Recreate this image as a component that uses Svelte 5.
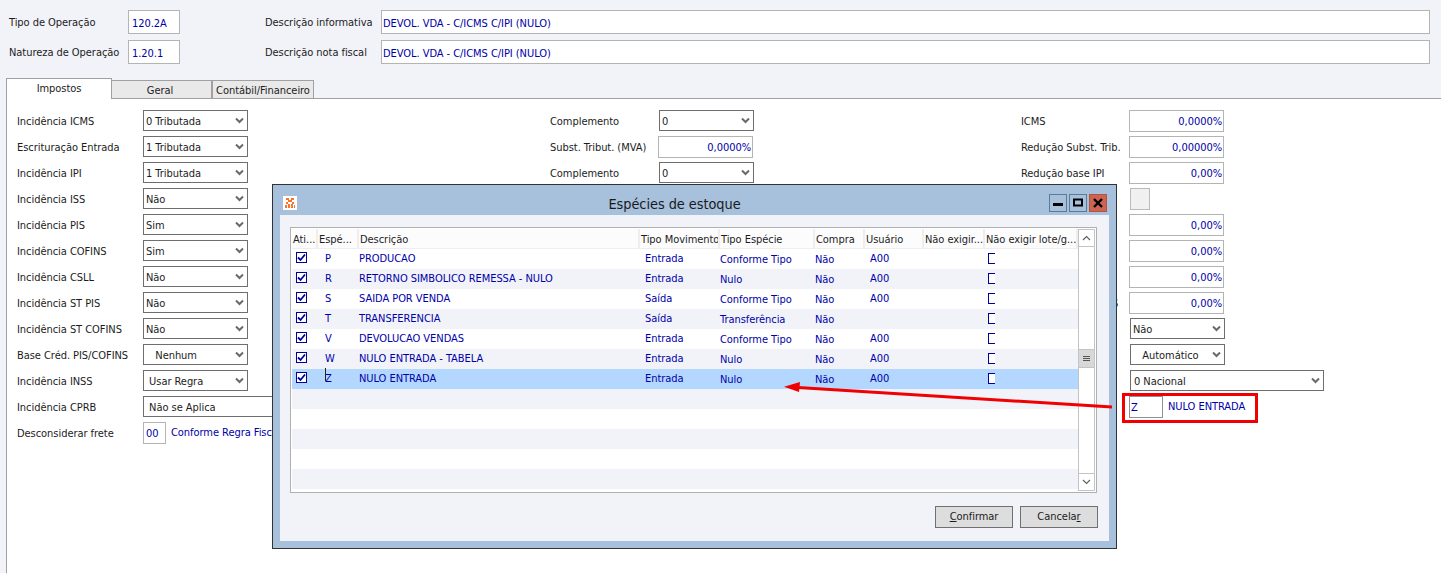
<script>
  const col1 = [
    ['Incidência ICMS', '0 Tributada'], ['Escrituração Entrada', '1 Tributada'], ['Incidência IPI', '1 Tributada'],
    ['Incidência ISS', 'Não'], ['Incidência PIS', 'Sim'], ['Incidência COFINS', 'Sim'], ['Incidência CSLL', 'Não'],
    ['Incidência ST PIS', 'Não'], ['Incidência ST COFINS', 'Não'], ['Base Créd. PIS/COFINS', '   Nenhum'], ['Incidência INSS', ' Usar Regra']
  ];
  const rows = [
    ['P', 'PRODUCAO', 'Entrada', 'Conforme Tipo', 'A00'],
    ['R', 'RETORNO SIMBOLICO REMESSA - NULO', 'Entrada', 'Nulo', 'A00'],
    ['S', 'SAIDA POR VENDA', 'Saída', 'Conforme Tipo', 'A00'],
    ['T', 'TRANSFERENCIA', 'Saída', 'Transferência', ''],
    ['V', 'DEVOLUCAO VENDAS', 'Entrada', 'Conforme Tipo', 'A00'],
    ['W', 'NULO ENTRADA - TABELA', 'Entrada', 'Nulo', 'A00'],
    ['Z', 'NULO ENTRADA', 'Entrada', 'Nulo', 'A00']
  ];
  const heads = ['Ati...', 'Espé...', 'Descrição', 'Tipo Movimento', 'Tipo Espécie', 'Compra', 'Usuário', 'Não exigir...', 'Não exigir lote/g...'];
  const blanks = [0, 1, 2, 3, 4];
  const pct = ['0,00%', '0,00%', '0,00%', '0,00%'];
  const auto = '   Automático';
  const aplica = ' Não se Aplica';
</script>

{#snippet chev()}
  <svg class="chev" width="9" height="7" viewBox="0 0 9 7"><path d="M1 1.5 L4.5 5 L8 1.5" fill="none" stroke="#6a6a6a" stroke-width="2"/></svg>
{/snippet}

<div class="page">
  <div class="top">
    <span class="lb">Tipo de Operação</span><div class="inp code">120.2A</div>
    <span class="lb">Descrição informativa</span><div class="inp wide">DEVOL. VDA - C/ICMS C/IPI (NULO)</div>
    <span class="lb">Natureza de Operação</span><div class="inp code">1.20.1</div>
    <span class="lb">Descrição nota fiscal</span><div class="inp wide">DEVOL. VDA - C/ICMS C/IPI (NULO)</div>
  </div>

  <div class="tabs">
    <div class="tab active">Impostos</div>
    <div class="tab geral">Geral</div>
    <div class="tab cont">Contábil/Financeiro</div>
  </div>

  <div class="panel">
    <div class="col c1">
      {#each col1 as [l, v]}
        <div class="row"><span class="rl">{l}</span><div class="sel">{v}{@render chev()}</div></div>
      {/each}
      <div class="row"><span class="rl">Incidência CPRB</span><div class="sel long">{aplica}</div></div>
      <div class="row"><span class="rl">Desconsiderar frete</span><div class="inp small">00</div><span class="link">Conforme Regra Fiscal</span></div>
    </div>
    <div class="col c2">
      <div class="row"><span class="rl">Complemento</span><div class="sel mid">0{@render chev()}</div></div>
      <div class="row"><span class="rl">Subst. Tribut. (MVA)</span><div class="inp num">0,0000%</div></div>
      <div class="row"><span class="rl">Complemento</span><div class="sel mid">0{@render chev()}</div></div>
    </div>
    <div class="col c3">
      <div class="row"><span class="rl">ICMS</span><div class="inp num">0,0000%</div></div>
      <div class="row"><span class="rl">Redução Subst. Trib.</span><div class="inp num">0,00000%</div></div>
      <div class="row"><span class="rl">Redução base IPI</span><div class="inp num">0,00%</div></div>
      <div class="row"><span class="rl"></span><div class="flag"></div></div>
      {#each pct as p, i}
        <div class="row"><span class="rl">{i === 3 ? 'Redução ST COFINS' : ''}</span><div class="inp num">{p}</div></div>
      {/each}
      <div class="row"><span class="rl"></span><div class="sel right">Não{@render chev()}</div></div>
      <div class="row"><span class="rl"></span><div class="sel right">{auto}{@render chev()}</div></div>
      <div class="row"><span class="rl"></span><div class="sel nac">0 Nacional{@render chev()}</div></div>
      <div class="row"><span class="rl"></span><div class="inp z">Z</div><span class="link nulo">NULO ENTRADA</span></div>
    </div>
  </div>

  <div class="dialog">
    <div class="titlebar">
      <div class="logo">
        <svg width="12" height="12" viewBox="0 0 12 12">
          <path d="M2 1h3v2H2zM7 1h3v2H7zM4 3h4v2H4zM2 5h2v2H2zM8 5h2v2H8zM1 8h2v3H1zM4 7h2v4H4zM7 7h2v4H7zM10 8h1v3h-1z" fill="#f8762c"/>
        </svg>
      </div>
      <div class="wtitle">Espécies de estoque</div>
      <div class="wbtns">
        <div class="wb"><svg width="10" height="10" viewBox="0 0 10 10"><rect x="0" y="5" width="10" height="3" fill="#000"/></svg></div>
        <div class="wb"><svg width="10" height="10" viewBox="0 0 10 10"><rect x="1" y="1.5" width="8" height="6" fill="none" stroke="#000" stroke-width="2"/></svg></div>
        <div class="wb close"><svg width="10" height="10" viewBox="0 0 10 10"><path d="M1 1l8 8M9 1l-8 8" stroke="#000" stroke-width="2.4"/></svg></div>
      </div>
    </div>
    <div class="body">
      <div class="grid">
        <div class="gmain">
          <div class="ghead">
            {#each heads as h}<div class="hc">{h}</div>{/each}
          </div>
          {#each rows as r, i}
            <div class="grow" class:alt={i % 2 === 1} class:sel-row={i === 6}>
              <div class="cell"><span class="cb"><svg width="9" height="9" viewBox="0 0 9 9"><path d="M1 4.5L3.5 7L8 1.5" fill="none" stroke="#00009a" stroke-width="1.8"/></svg></span></div>
              <div class="cell esp" class:zed={r[0] === 'Z'}>{r[0]}</div>
              <div class="cell">{r[1]}</div>
              <div class="cell mov">{r[2]}</div>
              <div class="cell low">{r[3]}</div>
              <div class="cell low">Não</div>
              <div class="cell usr">{r[4]}</div>
              <div class="cell"></div>
              <div class="cell"><span class="cb2"></span></div>
            </div>
          {/each}
          {#each blanks as b}
            <div class="grow" class:alt={b % 2 === 0}></div>
          {/each}
        </div>
        <div class="scroll">
          <div class="sbtn"><svg width="9" height="6" viewBox="0 0 9 6"><path d="M1 5L4.5 1.5L8 5" fill="none" stroke="#606060" stroke-width="1.2"/></svg></div>
          <div class="strack">
            <div class="thumb"><span></span><span></span><span></span></div>
          </div>
          <div class="sbtn"><svg width="9" height="6" viewBox="0 0 9 6"><path d="M1 1L4.5 4.5L8 1" fill="none" stroke="#606060" stroke-width="1.2"/></svg></div>
        </div>
      </div>
      <div class="actions">
        <div class="btn"><u>C</u>onfirmar</div>
        <div class="btn">Cancela<u>r</u></div>
      </div>
    </div>
  </div>

  <div class="redbox"></div>
  <svg class="arrow" width="340" height="30" viewBox="0 0 340 30">
    <path d="M14 7.6 L328 27" stroke="#f00000" stroke-width="3" fill="none"/>
    <path d="M0 6.7 L16 2 L15 12 Z" fill="#f00000"/>
  </svg>
</div>

<style>
  :global(body) { margin: 0; }
  .page {
    position: relative; width: 1441px; height: 573px; overflow: hidden; background: #f2f3f9;
    font: 11px "DejaVu Sans Condensed", "DejaVu Sans", sans-serif; color: #1c1c1c; letter-spacing: -0.05px;
  }
  .top {
    height: 78px; box-sizing: border-box; padding: 10px 11px 0 9px;
    display: grid; grid-template-columns: 119px 137px 116px 1fr; grid-auto-rows: 24px; row-gap: 6px; align-items: center;
  }
  .lb { white-space: nowrap; line-height: 24px; padding-top: 1px; height: 23px; }
  .inp {
    box-sizing: border-box; background: #fff; border: 1px solid #b4b4b4; color: #0000a8; height: 22px; line-height: 21px;
    padding: 0 3px; white-space: pre;
  }
  .top .inp { height: 24px; line-height: 22px; padding-top: 2px; }
  .code { width: 52px; }
  .wide { padding-left: 1px; }
  .tabs { display: flex; align-items: flex-end; height: 21px; padding-left: 6px; position: relative; z-index: 1; }
  .tab {
    box-sizing: border-box; height: 18px; background: #e9e9e9; border: 1px solid #a0a0a0; border-bottom: 0; border-left-width: 0;
    text-align: center; line-height: 19px; margin-bottom: 1px; color: #222;
  }
  .tab.active { width: 106px; height: 21px; margin-bottom: 0; background: #fff; border-left-width: 1px; line-height: 19px; }
  .geral { width: 100px; border-left: 0; padding-right: 3px; }
  .cont { width: 102px; border-left: 1px solid #a0a0a0; }
  .panel {
    height: 480px; margin-left: 6px; box-sizing: border-box; background: #fff;
    border-top: 1px solid #a0a0a0; border-left: 1px solid #a0a0a0; display: flex; padding: 11px 0 0 10px; margin-top: -1px;
  }
  .col { display: flex; flex-direction: column; gap: 4px; }
  .c1 { width: 533px; --lw: 126px; }
  .c2 { width: 471px; --lw: 108px; }
  .c3 { --lw: 108px; }
  .row { height: 22px; display: flex; align-items: flex-start; }
  .rl { width: var(--lw); flex: none; box-sizing: border-box; padding-top: 1px; height: 22px; line-height: 21px; white-space: nowrap; overflow: hidden; color: #1c1c1c; }
  .sel {
    position: relative; box-sizing: border-box; width: 105px; height: 21px; line-height: 19px; background: #fff;
    border: 1px solid #6e6e6e; padding: 1px 0 0 2px; white-space: pre; color: #1c1c1c;
  }
  .chev { position: absolute; right: 3px; top: 6px; }
  .long { width: 260px; }
  .mid { width: 95px; margin-left: 1px; }
  .right { width: 95px; margin-left: 1px; }
  .nac { width: 194px; margin-left: 1px; padding-left: 3px; }
  .num { width: 95px; text-align: right; padding: 0 1px 0 0; line-height: 22px; }
  .small { width: 23px; margin-right: 5px; height: 22px; padding-left: 2px; }
  .link { color: #0000a8; line-height: 22px; white-space: nowrap; }
  .flag { box-sizing: border-box; width: 20px; height: 22px; margin-left: 1px; background: #f0f0f0; border: 1px solid #bbb; }
  .z { width: 34px; padding-left: 1px; border-color: #909090; }
  .nulo { margin-left: 5px; }
  .dialog {
    position: absolute; left: 272px; top: 184px; width: 845px; height: 365px; box-sizing: border-box;
    background: #a7c0dc; border: 1px solid #333; display: flex; flex-direction: column; padding: 0 7px 7px 7px;
  }
  .titlebar { height: 30px; position: relative; display: flex; align-items: center; justify-content: center; flex: none; }
  .logo {
    position: absolute; left: 3px; top: 11px; width: 14px; height: 14px; background: #fff;
    display: flex; align-items: center; justify-content: center;
  }
  .wtitle { font-size: 14.4px; color: #1a1a1a; margin-top: 8px; margin-left: -40px; }
  .wbtns { position: absolute; right: 2px; top: 9px; display: flex; gap: 2px; }
  .wb {
    box-sizing: border-box; width: 18px; height: 18px; border: 1px solid #5d7a99; background: #a7c0dc;
    display: flex; align-items: center; justify-content: center;
  }
  .close { background: #cd6351; border-color: #b5533f; }
  .body { flex: 1; background: #f2f3f9; padding: 12px 11px 12px 10px; display: flex; flex-direction: column; }
  .grid {
    box-sizing: border-box; width: 807px; height: 266px; border: 1px solid #b0b0b0; background: #fff; padding: 1px; display: flex; overflow: hidden;
  }
  .gmain { width: 786px; flex: none; }
  .ghead, .grow {
    display: grid; grid-template-columns: 26px 41px 281px 80px 95px 50px 59px 61px 93px;
  }
  .ghead { height: 20px; background: #fff; }
  .hc { box-sizing: border-box; background: #fcfcfc; border-right: 2px solid #eee; border-bottom: 1px solid #eee; padding: 1px 0 0 1px; line-height: 19px; white-space: nowrap; overflow: hidden; color: #1c1c1c; }
  .grow { height: 20px; background: #fff; color: #0000a8; }
  .alt { background: #f2f3f9; }
  .sel-row { background: #b3d7ff; }
  .cell { line-height: 19px; white-space: nowrap; position: relative; }
  .esp { padding-left: 7px; }
  .mov { padding-left: 5px; }
  .low { line-height: 21px; }
  .usr { padding-left: 5px; }
  .zed::before { content: ""; position: absolute; left: 7px; top: -1px; width: 1px; height: 13px; background: #222; }
  .cb {
    position: absolute; left: 4px; top: 3px; box-sizing: border-box; width: 11px; height: 11px;
    border: 1px solid #00009a; background: #fff; display: flex; align-items: center; justify-content: center;
  }
  .cb2 {
    position: absolute; left: 3px; top: 4px; box-sizing: border-box; width: 7px; height: 11px;
    border: 1px solid #00009a; border-right: 0; background: #fff;
  }
  .scroll { width: 17px; flex: none; border: 1px solid #c4c4c4; box-sizing: border-box; display: flex; flex-direction: column; background: #fff; }
  .sbtn { height: 16px; flex: none; display: flex; align-items: center; justify-content: center; background: #fff; }
  .strack { flex: 1; border-top: 1px solid #c4c4c4; border-bottom: 1px solid #c4c4c4; padding-top: 102px; box-sizing: border-box; }
  .thumb { height: 19px; background: #d8d8d8; border-top: 1px solid #c4c4c4; border-bottom: 1px solid #c4c4c4; box-sizing: border-box; display: flex; flex-direction: column; align-items: center; justify-content: center; gap: 1px; }
  .thumb span { width: 7px; height: 1px; background: #555; }
  .actions { display: flex; justify-content: flex-end; gap: 7px; margin-top: 13px; }
  .btn {
    box-sizing: border-box; width: 78px; height: 22px; background: #dddddd; border: 1px solid #707070;
    text-align: center; line-height: 19px; color: #1c1c1c;
  }
  .redbox { position: absolute; left: 1122px; top: 393px; width: 136px; height: 30px; box-sizing: border-box; border: 3px solid #f00000; }
  .arrow { position: absolute; left: 784px; top: 380px; }
</style>
